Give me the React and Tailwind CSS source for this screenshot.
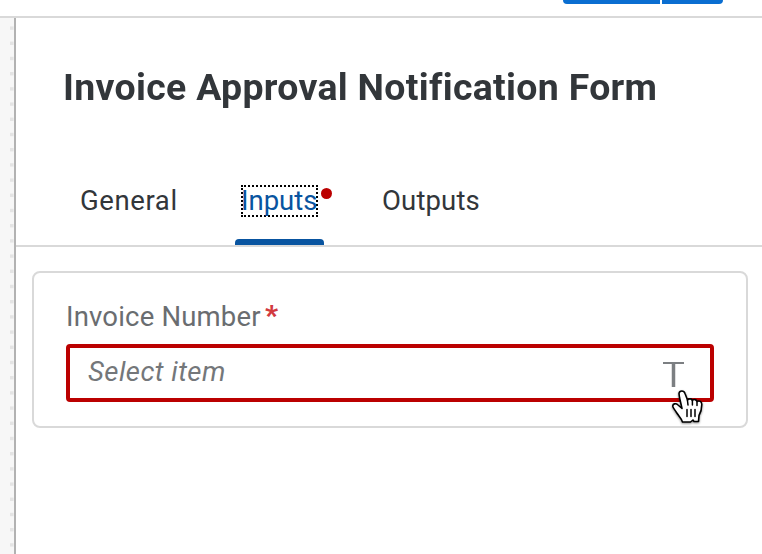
const font = { fontFamily: 'Roboto, "Open Sans", sans-serif' };

const dots = Array.from({ length: 36 }, (_, i) => i);

function CanvasEdge() {
  return (
    <aside className="w-4 shrink-0 border-r-2 border-[#b2b2b2] bg-[#f7f7f7]">
      <svg width="14" height="536" className="block">
        {dots.map((i) => (
          <rect key={i} x="10" y={8.4 + i * 15.2} width="3.6" height="3.4" fill="#e4e4e4" />
        ))}
      </svg>
    </aside>
  );
}

function Hand() {
  return (
    <svg viewBox="0 0 32 35" className="absolute left-[602px] top-[42px] h-[35px] w-8 drop-shadow-[0_1.5px_1px_rgba(0,0,0,0.45)]">
      <path
        d="M7 3.500C7.500 .2 12 .2 13 3.500L15.500 10C17 8.300 19.500 8.500 20.300 10.400C22 9 24.300 9.400 25 11.500C27.500 10.300 29.800 11.500 29.800 14.500C29.800 20 29 22 27 25.500L26.500 31.500H22L21 30L18.500 32H10.500C9.500 28.500 6.500 25.500 4.500 22.500C3 20 1 18 .8 16.500C.5 13.500 4 13 6 15L10 18.500L7.500 7.500Z"
        fill="white" stroke="black" strokeWidth="1.600" strokeLinejoin="round"
      />
      <path d="M15.400 10L16 15M20.400 10.500V15M25 12V15.500" fill="none" stroke="black" strokeWidth="1.500" strokeLinecap="round" />
      <path d="M15 19.500V26.500M19 19.500V26.500M23 19.500V26.500" stroke="black" strokeWidth="1.500" strokeLinecap="round" />
    </svg>
  );
}

export default function App() {
  return (
    <div className="flex h-[554px] w-[762px] flex-col overflow-hidden bg-white text-[#32363a]" style={font}>
      <header className="flex h-[18px] shrink-0 items-start gap-[2px] border-b-2 border-[#d9d9d9] pl-[563px]">
        <div className="h-1 w-[97px] rounded-bl-[8px] bg-[#0a6ed1]" />
        <div className="h-1 w-[61px] rounded-br-[8px] bg-[#0a6ed1]" />
      </header>
      <div className="flex min-h-0 flex-1">
        <CanvasEdge />
        <main className="min-w-0 flex-1">
          <h1 className="flex h-[139px] items-start whitespace-nowrap pl-[47px] pt-[46px] text-[36px] font-bold leading-[48px] tracking-[0.3px]">
            <span className="origin-left scale-x-[1.04]">Invoice Approval Notification Form</span>
          </h1>
          <nav className="flex h-[90px] items-start border-b-2 border-[#d9d9d9] pl-16 text-[27.5px] leading-8">
            <div className="w-[155px] pt-7 tracking-[0.6px]">General</div>
            <div className="relative h-[88px] w-[89px] pl-1.5 pt-7">
              <div className="flex h-8 w-[77px] items-center whitespace-nowrap border-2 border-dotted border-black leading-7 text-[#0854a0]">
                <span className="-ml-[2px] -mt-px">Inputs</span>
              </div>
              <i className="absolute left-[86px] top-[31px] size-[11px] rounded-full bg-[#bb0000]" />
              <div className="absolute bottom-0 left-0 h-1.5 w-[89px] rounded-t bg-[#0854a0]" />
            </div>
            <div className="pl-[58px] pt-7 tracking-[0.15px]">Outputs</div>
          </nav>
          <section className="ml-4 mt-6 h-[157px] w-[716px] rounded-lg border-2 border-[#d9d9d9] px-8 pt-[27px]">
            <label className="flex h-11 items-start whitespace-nowrap text-[27.5px] leading-8 text-[#6a6d70]">
              <span className="w-[199px] pt-px tracking-[0.18px]">Invoice Number</span>
              <span className="text-[28px] font-black text-[#d23a3f]">*</span>
            </label>
            <div className="relative flex h-[58px] w-[648px] items-start justify-between rounded-[4px] border-4 border-[#bb0000] pl-[18px] pr-[26px] pt-[7px] text-[27.5px] italic leading-8 text-[#74777a]">
              <span className="pt-px tracking-[0.45px]">Select item</span>
              <svg width="21" height="25" viewBox="0 0 21 25" className="mt-[7px]">
                <path d="M0 1H21" stroke="#7c7f82" strokeWidth="2" />
                <path d="M10.500 1V25" stroke="#7c7f82" strokeWidth="3.500" />
              </svg>
              <Hand />
            </div>
          </section>
        </main>
      </div>
    </div>
  );
}
